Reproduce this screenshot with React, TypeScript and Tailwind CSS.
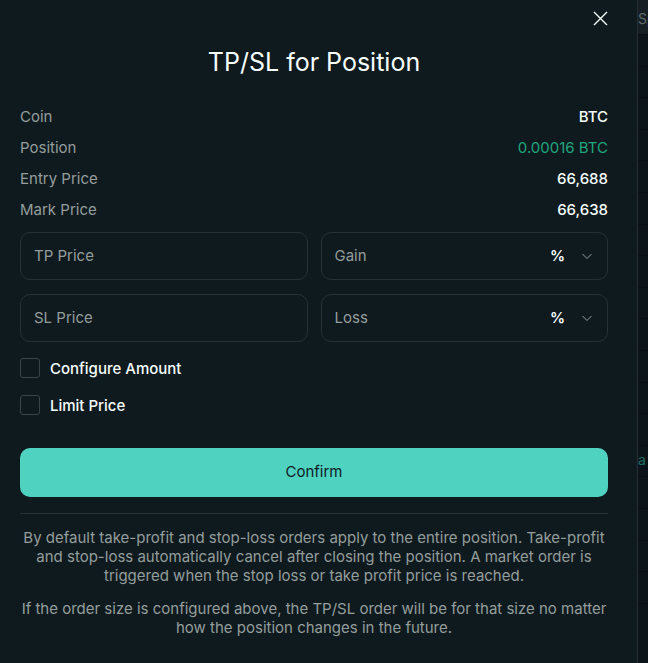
import React from "react";

const font = { fontFamily: "Inter, 'Noto Sans', sans-serif" };

function Chevron() {
  return (
    <svg width="12" height="12" viewBox="0 0 12 12" fill="none">
      <path d="M1.5 4 L6 8.5 L10.5 4" stroke="#949e9c" strokeWidth="1" />
    </svg>
  );
}

function Row({ label, value, green }: { label: string; value: string; green?: boolean }) {
  return (
    <div className="h-[31px] flex items-center justify-between text-[15px] leading-[20px]">
      <span className="text-[#949e9c]">{label}</span>
      <span className={green ? "text-[#1fa67d]" : "text-[#f6fefd] font-medium"}>{value}</span>
    </div>
  );
}

function InputBox({ placeholder, select }: { placeholder: string; select?: boolean }) {
  return (
    <div className="flex-1 h-[48px] rounded-[10px] border border-[#273035] flex items-center pl-[13px] pr-[14px] text-[15px]">
      <span className="text-[#949e9c] flex-1">{placeholder}</span>
      {select && (
        <div className="flex items-center gap-[16px]">
          <span className="text-[#f6fefd] font-semibold">%</span>
          <Chevron />
        </div>
      )}
    </div>
  );
}

function Check({ label }: { label: string }) {
  return (
    <div className="h-[20px] flex items-center gap-[10px]">
      <div className="w-[20px] h-[20px] rounded-[3px] border border-[#3a4549]" />
      <span className="text-[15px] font-medium text-[#f6fefd] leading-[20px] translate-y-[1px]">{label}</span>
    </div>
  );
}

export default function App() {
  return (
    <div className="w-[648px] h-[663px] overflow-hidden flex bg-[#0b1418]" style={font}>
      <div className="w-[638px] h-[680px] shrink-0 bg-[#0f1a1f] border-r border-b border-[#273035] rounded-br-[16px] pl-[20px] pr-[29px] flex flex-col">
        <div className="h-[38px] flex justify-end items-start pt-[11px]">
          <svg width="15" height="15" viewBox="0 0 15 15" fill="none">
            <path d="M1 1 L14 14 M14 1 L1 14" stroke="#f6fefd" strokeWidth="1.4" />
          </svg>
        </div>
        <div className="mt-[8px] text-center text-[25px] leading-[32px] text-[#f6fefd]">TP/SL for Position</div>
        <div className="mt-[23px] flex flex-col">
          <Row label="Coin" value="BTC" />
          <Row label="Position" value="0.00016 BTC" green />
          <Row label="Entry Price" value="66,688" />
          <Row label="Mark Price" value="66,638" />
        </div>
        <div className="mt-[7px] flex flex-col gap-[14px]">
          <div className="flex gap-[13px]">
            <InputBox placeholder="TP Price" />
            <InputBox placeholder="Gain" select />
          </div>
          <div className="flex gap-[13px]">
            <InputBox placeholder="SL Price" />
            <InputBox placeholder="Loss" select />
          </div>
        </div>
        <div className="mt-[16px] flex flex-col gap-[17px]">
          <Check label="Configure Amount" />
          <Check label="Limit Price" />
        </div>
        <button className="mt-[33px] h-[49px] w-full rounded-[10px] bg-[#50d2c1] text-[#0f1a1f] text-[15px]">
          Confirm
        </button>
        <div className="mt-[16px] h-px bg-[#273035]" />
        <div className="mt-[14px] text-center text-[15px] leading-[19px] text-[#949e9c]">
          <p>
            By default take-profit and stop-loss orders apply to the entire position. Take-profit and stop-loss
            automatically cancel after closing the position. A market order is triggered when the stop loss or take
            profit price is reached.
          </p>
          <p className="mt-[14px]">
            If the order size is configured above, the TP/SL order will be for that size no matter how the position
            changes in the future.
          </p>
        </div>
      </div>
      <div className="flex-1 flex flex-col">
        <div className="h-[34px] bg-[#161f24] text-[14px] text-[#5d6a6e] pt-[8px] whitespace-nowrap">Sp</div>
        {Array.from({ length: 19 }).map((_, i) => (
          <div key={i} className="h-[31.6px] border-t border-[#080e11] text-[14px] text-[#1f6f68] whitespace-nowrap leading-[28px]">
            {i === 13 ? "a" : ""}
          </div>
        ))}
      </div>
    </div>
  );
}
